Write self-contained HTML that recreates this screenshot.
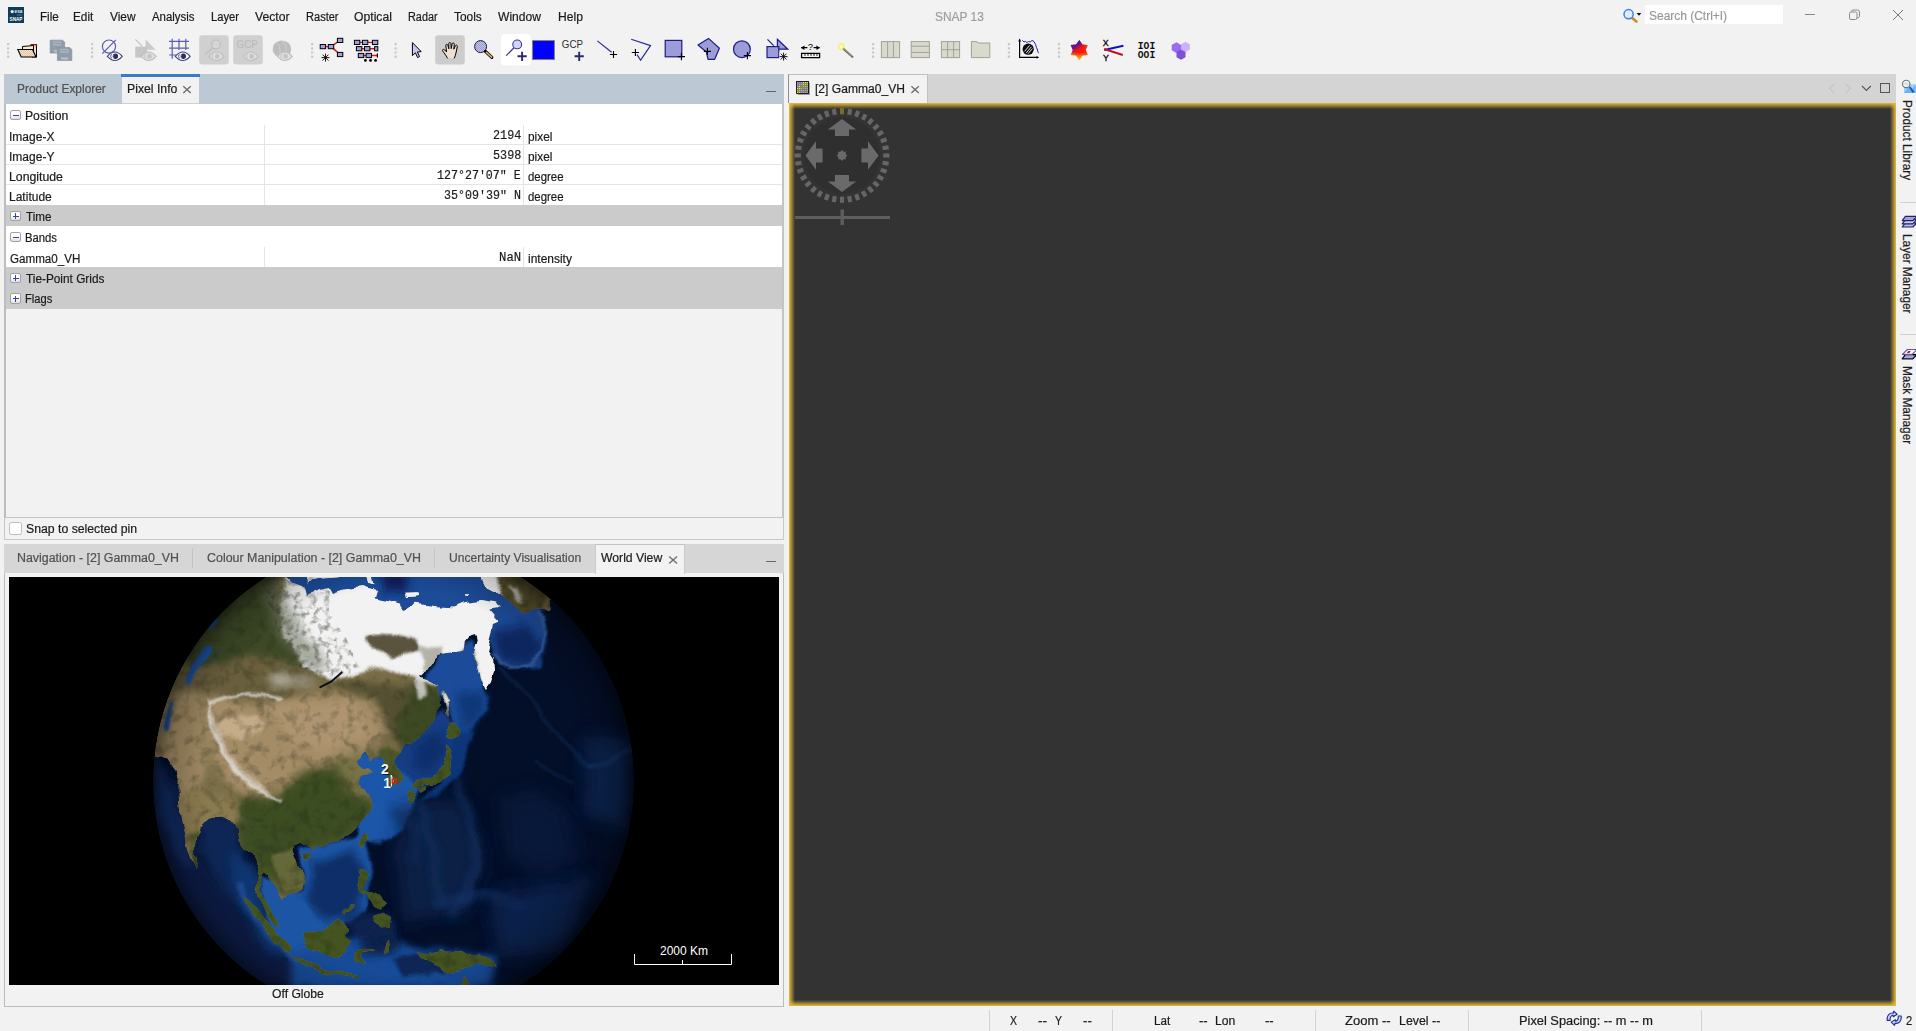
<!DOCTYPE html>
<html lang="en">
<head>
<meta charset="utf-8">
<title>SNAP 13</title>
<style>
*{box-sizing:border-box;margin:0;padding:0}
html,body{width:1916px;height:1031px;overflow:hidden;background:#f2f2f2}
body{position:relative;font-family:"Liberation Sans",sans-serif;font-size:12px;color:#1b1b1b}
.a{position:absolute;white-space:nowrap}
.t{position:absolute;white-space:pre;line-height:16px;height:16px;transform-origin:0 50%;-webkit-text-stroke:0.2px}
.ln{position:absolute;background:#e4e4e4}
.grow{position:absolute;left:6px;width:776px;background:#cbcbcb}
.pm{position:absolute;left:10px;width:10.6px;height:10.6px;border:1px solid #a2a2a2;border-radius:2px;background:linear-gradient(#ffffff 45%,#dedede)}
.pm:before{content:"";position:absolute;left:1.5px;top:4px;width:6px;height:1px;background:#3446a4}
.pm.plus:after{content:"";position:absolute;left:4px;top:1.5px;width:1px;height:6px;background:#3446a4}
.sep{position:absolute;top:1010px;width:1px;height:21px;background:#d2d2d2}
.vt{position:absolute;white-space:nowrap;line-height:14px;height:14px;font-size:12px;transform-origin:0 0;transform:rotate(90deg) scaleX(0.985);color:#1b1b1b;-webkit-text-stroke:0.2px}
</style>
</head>
<body>

<!-- ===== title / menu bar ===== -->
<div id="menubar">
<svg class="a" style="left:8px;top:7px" width="16" height="16" viewBox="0 0 16 16"><rect width="16" height="16" fill="#103c58"/><circle cx="4.2" cy="4.6" r="1.7" fill="#dfe8ee"/><text x="6.6" y="6.2" font-family="Liberation Sans,sans-serif" font-size="4.6" font-weight="bold" fill="#e8eef2">esa</text><rect x="9" y="7.6" width="5" height="0.8" fill="#5a8aa8"/><text x="1.6" y="14" font-family="Liberation Sans,sans-serif" font-size="5.8" font-weight="bold" fill="#fff" textLength="12.8" lengthAdjust="spacingAndGlyphs">SNAP</text></svg>
<!-- search -->
<svg class="a" style="left:1620px;top:4px" width="24" height="22" viewBox="1620 4 24 22"><path d="M1631.6,17.4 L1636.4,21.6" stroke="#d08a28" stroke-width="2.6" stroke-linecap="round"/><circle cx="1628.6" cy="14.2" r="4.6" fill="#dcecfc" stroke="#3c82d8" stroke-width="1.5"/><path d="M1636.6,13 H1641.4 L1639,15.8Z" fill="#111"/></svg>
<div class="a" style="left:1645px;top:5px;width:138px;height:19px;background:#fff"></div>
<svg class="a" style="left:1800px;top:6px" width="110" height="18" viewBox="1800 6 110 18"><path d="M1805,14.5 H1815" stroke="#8a8a8a" stroke-width="1"/><rect x="1849.5" y="12" width="7.5" height="7.5" rx="1.5" fill="none" stroke="#8a8a8a" stroke-width="1"/><path d="M1851.5,12 V11.5 Q1851.5,10 1853,10 H1857.5 Q1859.5,10 1859.5,12 V16.5 Q1859.5,17.8 1857.4,17.8" fill="none" stroke="#8a8a8a" stroke-width="1"/><path d="M1893,10 L1903,20 M1903,10 L1893,20" stroke="#7a7a7a" stroke-width="1"/></svg>
</div>

<!-- ===== toolbar ===== -->
<div id="toolbar"><!--TB-START--><svg class="a" style="left:0;top:32px" width="1200" height="38" viewBox="0 32 1200 38">
<defs>
<g id="eye"><path d="M-7.4,0.2 Q-3.6,-4.2 0,-4.2 Q3.8,-4.2 7.4,0.2 Q3.8,4.3 0,4.3 Q-3.6,4.3 -7.4,0.2Z" fill="#fff" stroke="#3c3c78" stroke-width="1.15"/><circle cx="0.6" cy="0" r="2.7" fill="#2c2c66"/><path d="M-3.4,-2 A3.8,3.8 0 0 0 -3.4,2.2" fill="none" stroke="#3c3c78" stroke-width="0.9"/><path d="M-1.4,-1.4 A2,2 0 0 0 -1.2,1.6" fill="none" stroke="#c8c8e4" stroke-width="0.9"/></g>
<g id="eyeg"><path d="M-7.4,0.2 Q-3.6,-4.2 0,-4.2 Q3.8,-4.2 7.4,0.2 Q3.8,4.3 0,4.3 Q-3.6,4.3 -7.4,0.2Z" fill="#e0e0e0" stroke="#bdbdbd" stroke-width="1.15"/><circle cx="0.6" cy="0" r="2.5" fill="#c4c4c4"/><path d="M-3.4,-2 A3.8,3.8 0 0 0 -3.4,2.2" fill="none" stroke="#c0c0c0" stroke-width="0.9"/><path d="M-1.4,-1.4 A2,2 0 0 0 -1.2,1.6" fill="none" stroke="#e4e4e4" stroke-width="0.9"/></g>
<g id="plus"><path d="M-3.6,0 H3.6 M0,-3.6 V3.6" stroke="#000" stroke-width="1.1" fill="none"/></g>
<g id="plusb"><path d="M-4.6,0 H4.6 M0,-4.6 V4.6" stroke="#2a2a72" stroke-width="1.9" fill="none"/></g>
<g id="ast"><path d="M-4,0 H4 M0,-4 V4 M-2.9,-2.9 L2.9,2.9 M-2.9,2.9 L2.9,-2.9" stroke="#000" stroke-width="0.9" fill="none"/></g>
<g id="nd"><rect x="-2.7" y="-2.1" width="5.4" height="4.2" fill="#a0a0e0" stroke="#000" stroke-width="1"/></g>
<g id="hdl"><rect x="-1" y="-1" width="2.2" height="2.2" rx="0.6" fill="#c6c6c6"/><rect x="-1" y="3.2" width="2.2" height="2.2" rx="0.6" fill="#c6c6c6"/><rect x="-1" y="7.4" width="2.2" height="2.2" rx="0.6" fill="#c6c6c6"/><rect x="-1" y="11.6" width="2.2" height="2.2" rx="0.6" fill="#c6c6c6"/></g>
<radialGradient id="starg" cx="0.52" cy="0.5" r="0.62"><stop offset="0" stop-color="#ff1208"/><stop offset="0.6" stop-color="#f42414"/><stop offset="1" stop-color="#ec8a1c"/></radialGradient>
<linearGradient id="starb" x1="0.25" y1="0" x2="0.55" y2="0.5"><stop offset="0" stop-color="#1c10c8"/><stop offset="0.55" stop-color="#4810a8" stop-opacity="0.75"/><stop offset="1" stop-color="#ff0000" stop-opacity="0"/></linearGradient>
<linearGradient id="stary" x1="0" y1="0" x2="0" y2="1"><stop offset="0.62" stop-color="#f0d000" stop-opacity="0"/><stop offset="1" stop-color="#e8d800"/></linearGradient>
<radialGradient id="glow" cx="0.5" cy="0.5" r="0.5"><stop offset="0" stop-color="#fff"/><stop offset="0.3" stop-color="#fffbb0"/><stop offset="0.6" stop-color="#f6ee50" stop-opacity="0.8"/><stop offset="1" stop-color="#f0e840" stop-opacity="0"/></radialGradient>
<pattern id="chk" width="2" height="2" patternUnits="userSpaceOnUse"><rect width="2" height="2" fill="#f4e2cc"/><rect width="1" height="1" fill="#e2c4a6"/><rect x="1" y="1" width="1" height="1" fill="#e2c4a6"/></pattern>
<pattern id="chk2" width="2" height="2" patternUnits="userSpaceOnUse"><rect width="2" height="2" fill="#c2c2e6"/><rect width="1" height="1" fill="#9c9cc8"/><rect x="1" y="1" width="1" height="1" fill="#9c9cc8"/></pattern>
</defs>
<use href="#hdl" x="8" y="44"/>
<use href="#hdl" x="92" y="44"/>
<use href="#hdl" x="312" y="44"/>
<use href="#hdl" x="395.5" y="44"/>
<use href="#hdl" x="873" y="44"/>
<use href="#hdl" x="1008.8" y="44"/>
<use href="#hdl" x="1058.9" y="44"/>
<path d="M31.5,44.5 H36.5 V57 H32" fill="#e8d8c0" stroke="#000" stroke-width="1"/><path d="M30.5,44.6 H36.4 V46" fill="none" stroke="#8a1a1a" stroke-width="1.4"/>
<path d="M22.5,46.5 L33.5,45.5 V56.5 H22.5Z" fill="#f6ecd8" stroke="#000" stroke-width="1"/>
<path d="M17.8,49.5 H32.5 L36,57 H21.2Z" fill="url(#chk)" stroke="#000" stroke-width="1.1"/>
<path d="M50.2,40.2 h12.4 l2,2 v10.8 h-14.4z" fill="#8f9caa" stroke="#8795a4" stroke-width="0.8" stroke-linejoin="round" transform="translate(0,0)"/>
<rect x="53.2" y="41.400000000000006" width="8" height="4.2" fill="#a8b3be"/>
<rect x="54.2" y="43.0" width="6" height="0.9" fill="#909daa"/>
<rect x="53.800000000000004" y="49.800000000000004" width="7.4" height="2.6" rx="0.8" fill="#b4bdc6"/>
<rect x="56" y="46.4" width="17" height="15" fill="#f2f2f2" opacity="0"/>
<path d="M57.4,47.6 h12.4 l2,2 v10.8 h-14.4z" fill="#8f9caa" stroke="#8795a4" stroke-width="0.8" stroke-linejoin="round" transform="translate(0,0)"/>
<rect x="60.4" y="48.800000000000004" width="8" height="4.2" fill="#a8b3be"/>
<rect x="61.4" y="50.4" width="6" height="0.9" fill="#909daa"/>
<rect x="61.0" y="57.2" width="7.4" height="2.6" rx="0.8" fill="#b4bdc6"/>
<circle cx="109" cy="46.6" r="6.6" fill="none" stroke="#5c5cb4" stroke-width="1.2"/><path d="M102.3,53.6 L115.9,39.8" stroke="#5c5cb4" stroke-width="1.2"/><use href="#eye" x="114.8" y="56.2"/>
<path d="M135.4,39.4 L142,46" stroke="#c4c4c4" stroke-width="1.2"/><path d="M145.6,39.3 L155.6,49.7 H145.6Z" fill="#cacaca"/><rect x="135.2" y="46.6" width="12" height="11" fill="#c6c6c6"/><use href="#eyeg" x="148.7" y="56.2"/>
<path d="M172.2,38.8 V58.8 M179,38.8 V50 M185.8,38.8 V50 M169,41.4 H189 M169,48.2 H189 M169,55 H176" stroke="#5c5cb4" stroke-width="1.2" fill="none"/><use href="#eye" x="182.7" y="56.2"/>
<rect x="199.2" y="35.2" width="29.6" height="29.4" rx="3" fill="#d0d0d0"/><rect x="233.2" y="35.2" width="29.6" height="29.4" rx="3" fill="#d0d0d0"/>
<circle cx="216" cy="44.4" r="4.4" fill="#d6d6d6" stroke="#bcbcbc" stroke-width="1.1"/><path d="M212.8,47.8 L205,54.6" stroke="#bcbcbc" stroke-width="1.2"/><use href="#eyeg" x="216.4" y="56.2"/>
<text x="236.6" y="47.8" font-family="Liberation Sans,sans-serif" font-size="10.4" fill="#b8b8b8" textLength="21.2" lengthAdjust="spacingAndGlyphs">GCP</text><use href="#eyeg" x="250.8" y="56.2"/>
<path d="M273,52 Q271.5,42 281.5,40.6 Q291,41 291.2,50 L290,54 L276,56Z" fill="#bdbdbd"/><path d="M277,43 Q281,47 280,55 M283,41 Q287,46 286.5,53" stroke="#d2d2d2" stroke-width="0.9" fill="none"/><use href="#eyeg" x="284.8" y="56.2"/>
<path d="M322.9,46.6 H331 M331,46.6 L340,40.4 M331,46.6 L340,54.4" stroke="#e01818" stroke-width="1.4" fill="none"/>
<use href="#nd" x="322.9" y="46.6"/>
<use href="#nd" x="331" y="46.6"/>
<use href="#nd" x="340.1" y="40.4"/>
<use href="#nd" x="340.1" y="54.5"/>
<use href="#ast" x="325.5" y="57.6"/>
<path d="M357,42.4 H375 M359,48.7 H376 M361,55.5 H377" stroke="#e01818" stroke-width="1.4" fill="none"/>
<use href="#nd" x="357.1" y="42.4"/>
<use href="#nd" x="365.1" y="42.4"/>
<use href="#nd" x="375.1" y="42.4"/>
<use href="#nd" x="359.1" y="48.7"/>
<use href="#nd" x="367.2" y="48.7"/>
<use href="#nd" x="361" y="55.5"/>
<use href="#nd" x="368.8" y="55.5"/>
<rect x="374.6" y="46.6" width="3.2" height="4.2" fill="#a0a0e0" stroke="#000" stroke-width="1"/><path d="M377.4,53.4 V57.6" stroke="#000" stroke-width="1.2"/>
<circle cx="365.4" cy="60.4" r="1.4" fill="#000"/>
<circle cx="370.5" cy="60.4" r="1.4" fill="#000"/>
<circle cx="375.6" cy="60.4" r="1.4" fill="#000"/>
<path d="M412.4,42.6 V55.6 L415.4,52.8 L417.6,57.6 L419.6,56.6 L417.4,52 L421.2,51.6Z" fill="#c6c6f2" stroke="#000" stroke-width="1" stroke-linejoin="miter"/>
<rect x="435.2" y="35.2" width="29.6" height="29.4" rx="3" fill="#cccccc"/>
<path d="M447.4,58 C446,55.2 443.8,52.6 442.6,50.8 C442,49.6 443.6,48.8 444.8,50 L446.6,52 L445.8,45.6 C445.6,44.2 447.4,43.8 447.8,45.2 L448.8,48.8 L448.8,43.6 C448.8,42.2 450.8,42.2 450.9,43.6 L451.2,48.6 L452.2,43.8 C452.5,42.5 454.4,42.8 454.3,44.2 L453.8,49.2 L455.4,45.8 C456,44.6 457.6,45.2 457.3,46.6 L456.2,52 C455.8,54.4 455.2,56 454.4,58Z" fill="#efe0d2"/><path d="M447.4,58 C446,55.2 443.8,52.6 442.6,50.8 C442,49.6 443.6,48.8 444.8,50 L446.6,52 L445.8,45.6 C445.6,44.2 447.4,43.8 447.8,45.2 L448.8,48.8 L448.8,43.6 C448.8,42.2 450.8,42.2 450.9,43.6 L451.2,48.6 L452.2,43.8 C452.5,42.5 454.4,42.8 454.3,44.2 L453.8,49.2 L455.4,45.8 C456,44.6 457.6,45.2 457.3,46.6 L456.2,52 C455.8,54.4 455.2,56 454.4,58" fill="none" stroke="#000" stroke-width="1" stroke-linejoin="round" stroke-linecap="round"/>
<circle cx="480.6" cy="46.6" r="6" fill="url(#chk2)" stroke="#1a1a4a" stroke-width="1"/><path d="M485.4,51.4 L491.8,57.4" stroke="#000" stroke-width="3.2" stroke-linecap="round"/><path d="M486.4,52.4 L491.6,57.2" stroke="#e6a868" stroke-width="1.6" stroke-linecap="round"/>
<rect x="501" y="34" width="29.8" height="31.4" rx="4" fill="#ffffff"/>
<path d="M514,47.8 L506.2,55.6" stroke="#3a3a84" stroke-width="1.3"/><circle cx="517.2" cy="44.4" r="4.4" fill="#d2d2ff" stroke="#3a3a84" stroke-width="1.1"/><use href="#plusb" x="522.1" y="56.3"/>
<rect x="532.6" y="40.6" width="21.8" height="19" fill="#0000ff" stroke="#8c7c64" stroke-width="0.9"/>
<text x="561.8" y="48" font-family="Liberation Sans,sans-serif" font-size="10.4" fill="#303030" textLength="21.2" lengthAdjust="spacingAndGlyphs">GCP</text><use href="#plusb" x="579.2" y="56.3"/>
<path d="M597.3,40.9 L611.6,52.2" stroke="#2a2a9c" stroke-width="1.2"/><use href="#plus" x="613.5" y="54.5"/>
<path d="M631.2,39.3 L650.5,45.6 L640.6,60.2 L637,54.6" stroke="#2a2a9c" stroke-width="1.2" fill="none"/><use href="#plus" x="635.4" y="52.5"/>
<rect x="665.2" y="40.4" width="16.6" height="16.4" fill="#9c9cd8" stroke="#1c1c8c" stroke-width="1.2"/><use href="#plus" x="681.4" y="56.6"/>
<path d="M708.5,38.4 L719.4,48.2 L714.7,59.3 H708 L706.4,52 L698,45Z" fill="#9c9cd8" stroke="#1c1c8c" stroke-width="1.2" stroke-linejoin="round"/><use href="#plus" x="707.4" y="51.4"/>
<circle cx="741.9" cy="49.2" r="8.4" fill="#9c9cd8" stroke="#1c1c8c" stroke-width="1.2"/><use href="#plus" x="747.4" y="55.6"/>
<path d="M767.5,39.3 L773.7,45.6" stroke="#1c1c8c" stroke-width="1.2"/><path d="M777.4,39.3 L787.8,49.2 H777.4Z" fill="#9c9cd8" stroke="#1c1c8c" stroke-width="1.2"/><rect x="767" y="46.6" width="11.8" height="11" fill="#9c9cd8" stroke="#1c1c8c" stroke-width="1.2"/><rect x="779.4" y="52" width="8.6" height="9" fill="#f2f2f2"/><use href="#ast" x="783.6" y="56.6"/>
<path d="M801.2,47.7 H807.4 M813.6,47.7 H819.6" stroke="#000" stroke-width="1.2"/><path d="M801,47.7 L804.4,45.4 V50Z M819.8,47.7 L816.4,45.4 V50Z" fill="#000"/>
<text x="810.5" y="50" text-anchor="middle" font-family="Liberation Sans,sans-serif" font-size="9.5" fill="#000">?</text>
<rect x="801.6" y="53.4" width="18" height="4.2" fill="#fff" stroke="#000" stroke-width="1.3"/><path d="M805,54 V56 M808,54 V56 M811,54 V56 M814,54 V56 M817,54 V56" stroke="#000" stroke-width="0.9"/>
<path d="M843.6,49 L852.4,56.8" stroke="#707060" stroke-width="2.2" stroke-linecap="round"/><path d="M844.4,49.2 L852,56" stroke="#a8a898" stroke-width="0.8"/><circle cx="841.2" cy="46.6" r="4.2" fill="url(#glow)"/>
<rect x="881.4" y="41.6" width="18.2" height="16" fill="#dadacc" stroke="#a0a09c" stroke-width="1"/>
<path d="M887.6,41.6 V57.6 M893.4,41.6 V57.6" stroke="#a0a09c" stroke-width="1"/>
<rect x="911.2" y="41.6" width="18.2" height="16" fill="#dadacc" stroke="#a0a09c" stroke-width="1"/>
<path d="M911.2,46.2 H929.4 M911.2,52.4 H929.4" stroke="#a0a09c" stroke-width="1"/>
<rect x="941.4" y="41.6" width="18.2" height="16" fill="#dadacc" stroke="#a0a09c" stroke-width="1"/>
<path d="M947.6,41.6 V57.6 M953.7,41.6 V57.6 M941.4,49.7 H959.6" stroke="#a0a09c" stroke-width="1"/>
<path d="M971.4,41.6 H977 L977.8,43 H989.8 V57.6 H971.4Z" fill="#dadacc" stroke="#a0a09c" stroke-width="1"/>
<path d="M1019.6,39.6 V57.4 H1038" stroke="#000" stroke-width="1.2" fill="none"/><path d="M1019.6,38.6 L1018.2,41.4 H1021Z M1039.2,57.4 L1036.6,56 V58.8Z" fill="#000"/>
<circle cx="1028.2" cy="49.2" r="5.6" fill="#0a0a0a"/><path d="M1024.6,51.4 L1029.6,45.4 M1026.2,53 L1031.4,46.8 M1028.2,53.6 L1032.4,48.6" stroke="#fff" stroke-width="0.9"/>
<path d="M1022.4,40.4 L1024,42 L1025.4,41.2 L1026.6,42.6 L1028.4,41.6 L1030.4,41.8 L1032,40.4 L1034,41.6 L1035.6,44.6 L1036.4,47.4 L1037.2,49 L1037.8,51.6 L1038.6,53.2" stroke="#1c1cc0" stroke-width="1" fill="none"/>
<path d="M1079.3,40.1 L1082.5,44.4 L1087.9,45.0 L1085.8,50.0 L1087.9,54.9 L1082.5,55.6 L1079.3,59.9 L1076.0,55.6 L1070.7,55.0 L1072.8,50.0 L1070.7,45.0 L1076.0,44.4Z" fill="url(#starg)"/><path d="M1079.3,40.1 L1082.5,44.4 L1087.9,45.0 L1085.8,50.0 L1087.9,54.9 L1082.5,55.6 L1079.3,59.9 L1076.0,55.6 L1070.7,55.0 L1072.8,50.0 L1070.7,45.0 L1076.0,44.4Z" fill="url(#starb)"/><path d="M1079.3,40.1 L1082.5,44.4 L1087.9,45.0 L1085.8,50.0 L1087.9,54.9 L1082.5,55.6 L1079.3,59.9 L1076.0,55.6 L1070.7,55.0 L1072.8,50.0 L1070.7,45.0 L1076.0,44.4Z" fill="url(#stary)"/>
<text x="1102.8" y="45.5" font-family="Liberation Sans,sans-serif" font-size="8.8" fill="#000" stroke="#000" stroke-width="0.3">X</text><text x="1103" y="61" font-family="Liberation Sans,sans-serif" font-size="8.8" fill="#000" stroke="#000" stroke-width="0.3">Y</text>
<path d="M1104.2,50 L1123.4,45.7" stroke="#1010c0" stroke-width="1.9"/><path d="M1104.2,49 L1122.8,55" stroke="#c01020" stroke-width="1.9"/>
<text x="1137.8" y="48.5" font-family="Liberation Mono,monospace" font-size="10.6" font-weight="bold" fill="#111" textLength="17.4" lengthAdjust="spacingAndGlyphs">IOI</text><text x="1137.8" y="58.1" font-family="Liberation Mono,monospace" font-size="10.6" font-weight="bold" fill="#111" textLength="17.4" lengthAdjust="spacingAndGlyphs">OOI</text>
<path d="M1189.9,49.6 L1185.4,52.2 L1180.9,49.6 L1180.9,44.4 L1185.4,41.8 L1189.9,44.4Z" fill="#cdb0ff"/>
<path d="M1181.1,50.3 L1176.4,53.0 L1171.7,50.3 L1171.7,44.9 L1176.4,42.2 L1181.1,44.9Z" fill="#9a6cf2"/>
<path d="M1185.5,57.2 L1181.0,59.8 L1176.5,57.2 L1176.5,52.0 L1181.0,49.4 L1185.5,52.0Z" fill="#7d50d6"/>
</svg><!--TB-END--></div>

<!-- ===== left top panel (Pixel Info) ===== -->
<div id="pixelinfo">
<div class="a" style="left:4px;top:74px;width:780px;height:30px;background:#bcc8d4"></div>
<div class="a" style="left:121.5px;top:77px;width:77px;height:26.5px;background:#f1f1f1;border-bottom:1px solid #d0d0d0"></div><div class="a" style="left:121px;top:74px;width:78.5px;height:3px;background:#3a7bc8"></div>
<svg class="a" style="left:180px;top:82px" width="14" height="14" viewBox="180 82 14 14"><path d="M183.3,86.2 L190.7,93 M190.7,86.2 L183.3,93" stroke="#6c6c6c" stroke-width="1.3"/></svg>
<div class="a" style="left:765.5px;top:91px;width:10.5px;height:1px;background:#666"></div>
<div class="a" style="left:4px;top:104px;width:780px;height:414px;border-left:2px solid #bdbdbd;border-right:2px solid #c4c4c4;border-bottom:1px solid #c4c4c4;background:#f2f2f2"></div>
<div class="a" style="left:6px;top:104px;width:776px;height:101px;background:#fff"></div>
<div class="a" style="left:6px;top:226px;width:776px;height:41px;background:#fff"></div>
<div class="grow" style="top:205px;height:21px"></div>
<div class="grow" style="top:267px;height:42px"></div>
<div class="ln" style="left:6px;top:144px;width:776px;height:1px"></div>
<div class="ln" style="left:6px;top:164px;width:776px;height:1px"></div>
<div class="ln" style="left:6px;top:184px;width:776px;height:1px"></div>
<div class="ln" style="left:264px;top:125px;width:1px;height:80px"></div>
<div class="ln" style="left:523px;top:125px;width:1px;height:80px"></div>
<div class="ln" style="left:264px;top:247px;width:1px;height:20px"></div>
<div class="ln" style="left:523px;top:247px;width:1px;height:20px"></div>
<div class="pm" style="top:109.5px"></div>
<div class="pm plus" style="top:210.5px"></div>
<div class="pm" style="top:231.5px"></div>
<div class="pm plus" style="top:272.5px"></div>
<div class="pm plus" style="top:293px"></div>
<div class="a" style="left:4px;top:518px;width:780px;height:22px;border:1px solid #c8c8c8;border-top:0"></div>
<div class="a" style="left:8.5px;top:521.5px;width:13px;height:13px;border:1px solid #bcbcbc;border-radius:2.5px;background:#fff"></div>
</div>

<!-- ===== left bottom panel (World View) ===== -->
<div id="worldview">
<div class="a" style="left:4px;top:544px;width:780px;height:29px;background:#d6d6d6"></div>
<div class="a" style="left:595px;top:544px;width:90px;height:30px;background:#f2f2f2;border:1px solid #cccccc;border-top-color:#c2c2c2;border-bottom:0"></div>
<div class="a" style="left:192px;top:548px;width:1px;height:20px;background:#c4c4c4"></div>
<div class="a" style="left:434px;top:548px;width:1px;height:20px;background:#c4c4c4"></div>
<svg class="a" style="left:666px;top:553px" width="14" height="14" viewBox="666 553 14 14"><path d="M669.2,556.4 L677,563.6 M677,556.4 L669.2,563.6" stroke="#6c6c6c" stroke-width="1.3"/></svg>
<div class="a" style="left:766px;top:561px;width:10px;height:1px;background:#666"></div>
<div class="a" style="left:4px;top:573px;width:780px;height:434px;border:1px solid #bcbcbc;border-top:0"></div>
<!--GLOBE-START--><svg class="a" style="left:9px;top:577px" width="770" height="408" viewBox="9 577 770 408">
<defs>
<clipPath id="gc"><circle cx="393.5" cy="781" r="240"/></clipPath>
<clipPath id="lc"><path d="M201.5,566.2 L285.6,566.2 L285.6,577.2 L291.4,583.0 L303.8,587.4 L306.0,596.9 L318.5,591.1 L328.7,587.9 L331.9,594.0 L341.8,590.8 L362.3,587.9 L376.9,591.1 L374.7,598.4 L388.6,601.3 L397.4,604.2 L401.0,610.1 L412.0,606.4 L415.6,602.8 L435.4,605.0 L454.4,606.4 L464.6,602.0 L482.1,600.1 L495.3,602.5 L499.7,608.9 L490.2,610.4 L499.7,621.5 L493.8,624.0 L492.4,632.7 L490.0,642.2 L488.0,652.4 L493.1,660.6 L494.1,670.8 L491.0,680.9 L485.9,689.1 L481.9,680.9 L475.8,664.6 L473.7,654.5 L477.8,640.2 L475.8,634.1 L469.6,636.1 L464.6,642.2 L463.5,650.4 L451.3,653.4 L439.1,655.5 L430.9,662.6 L423.8,672.8 L419.7,676.9 L430.9,680.9 L439.1,685.0 L439.5,703.6 L436.8,714.4 L431.4,725.3 L423.2,734.8 L415.1,740.3 L406.9,744.3 L401.5,751.1 L397.4,756.6 L396.1,760.6 L400.1,766.1 L402.9,772.9 L402.2,779.6 L398.8,783.7 L394.0,785.1 L390.6,783.7 L389.3,776.9 L387.9,771.5 L386.6,766.1 L385.2,760.6 L379.8,756.6 L374.3,756.6 L370.3,757.9 L369.6,753.8 L366.2,751.8 L360.7,757.9 L358.7,760.6 L360.7,766.1 L363.5,768.8 L368.9,768.1 L373.0,770.8 L367.5,773.5 L360.7,778.3 L359.4,782.4 L364.8,787.8 L370.3,797.3 L370.9,805.4 L367.5,815.0 L362.1,823.1 L366.1,820.0 L361.3,823.2 L351.7,832.8 L338.9,840.8 L326.0,844.0 L316.4,847.2 L311.6,849.6 L308.4,846.4 L300.4,844.8 L294.0,847.2 L290.0,853.6 L294.0,861.6 L300.4,871.2 L303.6,880.8 L302.8,888.8 L297.2,893.6 L287.6,896.8 L282.8,900.0 L281.2,896.8 L278.0,890.4 L271.6,882.4 L266.8,874.4 L261.2,871.2 L258.8,876.0 L259.6,887.2 L262.0,895.2 L265.2,900.0 L271.6,906.4 L276.4,917.6 L279.9,927.6 L276.4,925.7 L268.4,916.0 L262.8,904.8 L258.0,896.8 L254.8,888.8 L255.6,880.8 L256.4,868.0 L254.0,855.2 L247.6,852.0 L241.2,850.4 L238.8,836.0 L236.4,820.0 L240.9,842.2 L237.8,830.0 L229.6,819.8 L221.5,815.7 L209.3,819.8 L201.1,825.9 L195.0,836.1 L193.4,850.4 L196.0,865.7 L190.9,860.6 L186.9,848.3 L183.8,832.0 L180.7,815.7 L178.7,795.4 L178.7,783.1 L176.7,775.0 L175.7,770.6 L168.5,759.4 L162.4,756.3 L152.2,758.4 L99.3,758.4 L99.3,562.8Z M442.2,690.0 L446.3,692.7 L450.4,700.9 L448.4,702.2 L447.7,709.0 L449.0,717.2 L447.0,717.2 L445.6,706.3 L443.6,698.1Z M447.7,725.3 L454.5,724.0 L462.6,730.7 L458.5,736.2 L451.7,738.9 L446.3,736.2Z M446.3,744.3 L451.7,747.0 L453.8,755.2 L451.7,766.1 L450.4,776.9 L442.2,779.6 L435.4,783.7 L427.3,783.7 L420.5,785.1 L412.4,787.1 L409.6,785.1 L417.8,779.6 L428.7,776.9 L436.8,772.9 L443.6,766.1 L446.3,755.2Z M405.6,790.5 L412.4,789.8 L415.1,794.6 L412.4,801.4 L408.3,802.7 L406.2,797.3Z M417.8,787.8 L425.9,785.1 L427.3,787.8 L420.5,791.9Z M358.9,842.4 L362.9,836.0 L366.9,835.2 L366.1,842.4 L362.1,849.6 L359.7,847.2Z M302.0,856.0 L308.4,853.6 L312.4,856.0 L310.0,860.0 L304.4,860.8Z M192.6,853.4 L196.0,856.5 L198.1,864.6 L195.0,867.7 L192.6,862.6Z M244.4,898.4 L249.2,900.0 L257.2,909.6 L266.8,922.4 L276.4,932.1 L286.0,941.7 L291.6,946.5 L290.8,952.9 L284.4,950.5 L274.8,941.7 L263.6,928.9 L252.4,912.8Z M302.8,934.5 L310.0,932.1 L319.6,930.5 L329.2,925.7 L340.5,920.0 L348.5,924.0 L350.1,928.9 L345.3,935.3 L349.3,941.7 L343.7,946.5 L340.5,952.9 L337.3,958.5 L329.2,956.1 L319.6,951.3 L310.0,949.7 L306.8,941.7Z M291.6,956.1 L302.0,960.1 L316.4,964.9 L332.4,969.7 L345.3,972.9 L358.1,976.1 L358.1,978.5 L342.1,976.1 L326.0,972.1 L310.0,967.3 L294.0,960.1Z M358.1,869.6 L364.5,868.0 L367.7,872.8 L366.1,880.8 L363.7,888.8 L369.3,893.6 L364.5,895.2 L358.1,887.2 L356.5,879.2Z M367.7,892.0 L377.3,895.2 L383.7,903.2 L380.5,909.6 L372.5,906.4 L367.7,900.0Z M374.1,916.0 L383.7,912.8 L390.1,919.2 L388.5,928.9 L380.5,927.3 L374.9,922.4Z M343.7,912.0 L353.3,904.8 L354.9,906.4 L345.3,914.4Z M353.3,952.9 L358.1,949.7 L370.9,948.1 L374.1,950.5 L362.9,952.9 L361.3,957.7 L367.7,964.1 L366.1,966.5 L359.7,962.5 L356.5,965.7 L354.1,959.3Z M414.6,952.3 L426.9,954.3 L441.1,951.2 L461.5,952.3 L479.8,954.3 L490.0,960.4 L496.1,965.5 L485.9,967.5 L473.7,965.5 L461.5,970.6 L447.2,973.7 L441.1,968.6 L430.9,962.4 L420.7,958.4Z M384.1,942.1 L388.1,941.1 L389.2,950.2 L385.1,952.3Z M460.5,985.1 L464.6,975.7 L469.6,985.1Z M482.1,570.6 L482.1,579.4 L485.8,586.7 L493.8,591.1 L499.7,596.9 L507.0,600.6 L515.0,605.0 L521.6,613.3 L528.2,614.5 L533.3,609.3 L550.8,610.1 L550.8,570.6Z M306.8,584.1 L309.7,580.8 L321.4,578.7 L338.9,577.2 L338.9,572.1 L306.8,572.1Z M365.2,573.5 L371.1,573.5 L373.3,585.2 L368.1,583.8Z M406.1,592.8 L416.4,592.2 L417.1,596.2 L406.9,596.9Z M465.3,593.3 L469.0,593.3 L469.0,595.8 L465.3,595.8Z"/></clipPath>
<filter id="b1" x="-20%" y="-20%" width="140%" height="140%"><feGaussianBlur stdDeviation="0.8"/></filter>
<filter id="b3" x="-30%" y="-30%" width="160%" height="160%"><feGaussianBlur stdDeviation="1.8"/></filter>
<filter id="b6" x="-40%" y="-40%" width="180%" height="180%"><feGaussianBlur stdDeviation="4"/></filter>
<filter id="b12" x="-50%" y="-50%" width="200%" height="200%"><feGaussianBlur stdDeviation="9"/></filter>
<filter id="spk" x="0" y="0" width="100%" height="100%" color-interpolation-filters="sRGB"><feTurbulence type="fractalNoise" baseFrequency="0.09" numOctaves="3" seed="7" result="n"/><feColorMatrix in="n" type="matrix" values="0 0 0 0 0.12  0 0 0 0 0.14  0 0 0 0 0.08  0 0 0 3.2 -1.55"/><feComposite in2="SourceGraphic" operator="in"/></filter>
<filter id="spk2" x="0" y="0" width="100%" height="100%" color-interpolation-filters="sRGB"><feTurbulence type="fractalNoise" baseFrequency="0.16" numOctaves="2" seed="3" result="n"/><feColorMatrix in="n" type="matrix" values="0 0 0 0 0.1  0 0 0 0 0.12  0 0 0 0 0.06  0 0 0 2.4 -1.1"/><feGaussianBlur stdDeviation="0.5"/><feComposite in2="SourceGraphic" operator="in"/></filter>
<filter id="dsp" x="0" y="0" width="100%" height="100%" color-interpolation-filters="sRGB"><feTurbulence type="fractalNoise" baseFrequency="0.045" numOctaves="3" seed="11" result="t"/><feDisplacementMap in="SourceGraphic" in2="t" scale="9" xChannelSelector="R" yChannelSelector="G"/></filter>
<radialGradient id="limb" cx="393.5" cy="781" r="240" gradientUnits="userSpaceOnUse"><stop offset="0" stop-color="#000" stop-opacity="0"/><stop offset="0.8" stop-color="#000" stop-opacity="0"/><stop offset="0.94" stop-color="#000" stop-opacity="0.2"/><stop offset="1" stop-color="#000" stop-opacity="0.5"/></radialGradient>
</defs>
<rect x="9" y="577" width="770" height="408" fill="#000"/>
<g clip-path="url(#gc)">
<rect x="100" y="520" width="600" height="520" fill="#030e28"/>
<g filter="url(#dsp)">
<rect x="100" y="520" width="600" height="520" fill="#030e28"/>
<path d="M140.0,734.1 L187.7,797.8 L203.6,861.4 L243.4,917.1 L283.2,956.9 L346.8,985.1 L140.0,985.1Z" fill="#071d46" filter="url(#b6)" opacity="1"/>
<path d="M154.3,754.0 L179.8,813.7 L193.7,871.3 L179.8,861.4 L155.9,813.7Z" fill="#0c2c60" filter="url(#b6)" opacity="1"/>
<path d="M195.7,817.6 L237.5,813.7 L241.4,853.4 L249.4,921.1 L219.6,889.2 L199.7,853.4Z" fill="#0a2654" filter="url(#b6)" opacity="1"/>
<path d="M232.3,849.5 L256.1,869.4 L272.1,933.0 L295.9,958.9 L271.3,954.9 L242.6,913.1 L230.7,877.3Z" fill="#103670" filter="url(#b6)" opacity="1"/>
<path d="M239.4,885.3 L259.3,925.0 L291.2,956.9 L327.0,972.8" fill="none" stroke="#1a4c94" stroke-width="7" stroke-linecap="round" stroke-linejoin="round" filter="url(#b3)" opacity="0.8"/>
<path d="M259.3,567.0 L541.8,567.0 L545.7,610.8 L498.0,602.8 L490.0,618.8 L394.6,618.8 L271.3,602.8Z" fill="#1b4c98" filter="url(#b3)" opacity="1"/>
<path d="M378.7,573.0 L411.3,573.0 L407.3,591.7 L383.4,592.5Z" fill="#0a1f58" filter="url(#b6)" opacity="1"/>
<path d="M486.1,594.9 L521.9,586.9 L543.7,614.8 L547.7,640.6 L539.8,668.5 L509.9,667.3 L492.0,656.5 L490.0,630.7Z" fill="#1a4a94" filter="url(#b3)" opacity="1"/>
<path d="M496.0,631.5 L521.9,623.5 L544.9,643.4 L537.8,665.7 L510.7,664.9 L495.2,654.6Z" fill="#0b2860" filter="url(#b6)" opacity="1"/>
<path d="M494.0,656.5 L509.9,667.3 L531.8,665.7 L542.5,650.6 L545.7,630.7 L539.8,610.8" fill="none" stroke="#3a64a0" stroke-width="2.2" stroke-linecap="round" stroke-linejoin="round" filter="url(#b1)" opacity="0.9"/>
<path d="M418.4,684.4 L442.3,652.6 L472.1,640.6 L480.1,654.6 L482.9,686.4 L488.1,708.3 L467.0,736.1 L453.4,728.1 L444.3,696.3Z" fill="#1a4c9a" filter="url(#b3)" opacity="1"/>
<path d="M455.0,694.3 L482.1,689.6 L485.3,710.2 L467.0,734.9Z" fill="#113878" filter="url(#b6)" opacity="1"/>
<path d="M392.6,756.0 L418.4,734.1 L443.1,708.3 L455.0,734.1 L451.1,762.0 L435.1,782.6 L410.5,791.8 L400.5,775.9Z" fill="#123c84" filter="url(#b3)" opacity="1"/>
<path d="M414.5,746.0 L442.3,730.1 L447.1,754.0 L430.4,773.9 L414.5,769.9Z" fill="#0d2e6c" filter="url(#b6)" opacity="1"/>
<path d="M455.0,728.1 L472.1,734.1 L460.2,775.9 L436.3,797.8 L418.4,801.7 L442.3,781.8Z" fill="#113a80" filter="url(#b3)" opacity="0.9"/>
<path d="M352.8,746.0 L396.6,762.0 L418.4,789.8 L414.5,801.7 L402.5,831.6 L377.9,843.5 L356.8,842.3 L359.6,817.6 L358.0,797.8 L352.8,777.9Z" fill="#1c56a8" filter="url(#b3)" opacity="1"/>
<path d="M297.1,849.5 L362.8,835.5 L372.7,869.4 L364.7,913.1 L340.9,927.0 L309.1,935.0 L299.1,917.9 L278.4,898.0 L303.9,890.0Z" fill="#1c54a4" filter="url(#b3)" opacity="1"/>
<path d="M311.8,862.2 L354.8,849.5 L367.5,878.1 L355.6,913.9 L327.0,921.9 L307.1,902.0Z" fill="#0e2e68" filter="url(#b6)" opacity="1"/>
<path d="M258.5,876.5 L277.2,881.3 L288.0,889.2 L309.1,909.1 L321.0,927.0 L352.8,950.9 L299.1,966.8 L270.5,933.0Z" fill="#1c54a4" filter="url(#b3)" opacity="1"/>
<path d="M291.2,952.9 L362.8,933.0 L418.4,948.9 L498.0,954.9 L490.0,988.7 L291.2,988.7Z" fill="#184c98" filter="url(#b6)" opacity="1"/>
<path d="M356.8,933.0 L394.6,925.0 L400.5,949.7 L364.7,957.7Z" fill="#08204c" filter="url(#b6)" opacity="1"/>
<path d="M346.8,916.3 L387.4,912.3 L394.6,935.0 L354.8,939.0Z" fill="#0a2450" filter="url(#b6)" opacity="1"/>
<path d="M394.6,956.9 L442.3,952.9 L450.3,972.8 L402.5,976.8Z" fill="#0a2250" filter="url(#b3)" opacity="0.9"/>
<path d="M402.5,805.7 L458.2,797.8 L486.1,853.4 L470.2,913.1 L402.5,921.1 L394.6,853.4Z" fill="#08204a" filter="url(#b12)" opacity="0.9"/>
<path d="M458.2,779.9 L470.9,821.6 L478.9,861.4 L467.0,893.2 L451.1,913.9" fill="none" stroke="#14386e" stroke-width="6" stroke-linecap="round" stroke-linejoin="round" filter="url(#b6)" opacity="0.8"/>
<path d="M464.2,781.8 L477.3,821.6 L485.7,861.4 L475.3,893.2" fill="none" stroke="#020a1c" stroke-width="3" stroke-linecap="round" stroke-linejoin="round" filter="url(#b3)" opacity="0.6"/>
<path d="M418.4,802.5 L435.1,853.4 L439.1,902.0" fill="none" stroke="#10305f" stroke-width="8" stroke-linecap="round" stroke-linejoin="round" filter="url(#b6)" opacity="0.7"/>
<path d="M394.6,813.7 L418.4,829.6 L414.5,861.4" fill="none" stroke="#0e2a58" stroke-width="8" stroke-linecap="round" stroke-linejoin="round" filter="url(#b6)" opacity="0.6"/>
<path d="M436.3,905.2 L482.1,893.2 L521.9,905.2" fill="none" stroke="#12346a" stroke-width="8" stroke-linecap="round" stroke-linejoin="round" filter="url(#b6)" opacity="0.7"/>
<path d="M584.7,734.1 L631.2,742.1 L627.3,833.6 L585.5,813.7Z" fill="#0c2a5a" filter="url(#b12)" opacity="0.7"/>
<path d="M490.0,893.2 L597.4,875.3 L559.6,952.9 L498.0,957.7Z" fill="#0b2654" filter="url(#b12)" opacity="0.75"/>
<path d="M500.0,667.3 L537.8,706.3 L562.4,742.1 L590.3,766.7" fill="none" stroke="#153a68" stroke-width="4" stroke-linecap="round" stroke-linejoin="round" filter="url(#b3)" opacity="0.35"/>
<path d="M590.3,766.7 L609.4,762.0 L631.2,746.8" fill="none" stroke="#1a4272" stroke-width="5" stroke-linecap="round" stroke-linejoin="round" filter="url(#b3)" opacity="0.35"/>
<path d="M537.8,762.0 L569.6,781.8" fill="none" stroke="#173e70" stroke-width="5" stroke-linecap="round" stroke-linejoin="round" filter="url(#b3)" opacity="0.25"/>
<path d="M498.0,797.8 L537.8,789.8 L569.6,813.7 L577.5,861.4 L537.8,877.3 L506.0,853.4Z" fill="#0a2048" filter="url(#b12)" opacity="0.5"/>
<g clip-path="url(#lc)">
<rect x="100" y="500" width="600" height="520" fill="#7a6e48"/>
<path d="M277.2,567.0 L239.4,567.0 L179.8,634.7 L187.7,670.5 L219.6,668.5 L259.3,656.5 L291.2,667.3 L317.0,672.5 L299.9,642.6 L280.0,614.8 L275.2,590.9Z" fill="#3e4828" filter="url(#b6)" opacity="1"/>
<path d="M179.8,672.5 L219.6,667.3 L259.3,656.5 L317.0,672.5 L309.1,696.3 L259.3,704.3 L203.6,696.3 L177.8,690.4Z" fill="#6a5e3c" filter="url(#b6)" opacity="1"/>
<path d="M148.0,694.3 L203.6,694.3 L208.4,734.1 L204.4,781.8 L179.8,817.6 L155.9,805.7 L148.0,754.0Z" fill="#9c8660" filter="url(#b6)" opacity="1"/>
<path d="M203.6,694.3 L259.3,703.1 L307.1,694.3 L347.6,690.4 L379.5,702.3 L387.4,734.1 L363.5,754.8 L331.7,762.7 L299.9,774.7 L272.1,798.5 L235.5,790.6 L211.6,762.0 L205.6,726.2Z" fill="#a48c66" filter="url(#b6)" opacity="1"/>
<path d="M219.6,719.0 L255.4,714.2 L268.1,730.1 L244.2,738.9 L219.6,734.9Z" fill="#c4ac88" filter="url(#b3)" opacity="1"/>
<path d="M272.1,707.1 L354.8,703.1 L371.5,734.1 L331.7,750.8 L291.2,742.9Z" fill="#ae9470" filter="url(#b6)" opacity="1"/>
<path d="M315.0,676.4 L418.4,688.4 L439.1,706.3 L435.1,734.9 L403.3,750.8 L387.4,734.1 L379.5,703.1 L347.6,690.4Z" fill="#545030" filter="url(#b6)" opacity="1"/>
<path d="M414.5,684.4 L444.3,682.4 L448.3,710.2 L439.1,734.9 L427.2,750.8 L402.5,752.0 L394.6,726.2Z" fill="#3c4824" filter="url(#b6)" opacity="1"/>
<path d="M331.7,762.7 L363.5,754.8 L379.5,766.7 L371.5,798.5 L347.6,790.6Z" fill="#787244" filter="url(#b6)" opacity="1"/>
<path d="M272.1,798.5 L299.9,774.7 L331.7,762.7 L347.6,790.6 L371.5,798.5 L374.7,821.6 L347.6,842.3 L315.8,850.3 L299.9,854.2 L303.9,890.0 L284.0,894.0 L259.3,870.1 L240.2,853.4 L233.5,821.6 L232.3,798.5Z" fill="#3c4e22" filter="url(#b6)" opacity="1"/>
<path d="M252.6,864.6 L268.1,868.6 L284.0,929.8 L271.3,929.8 L255.4,893.2Z" fill="#44541f" filter="url(#b3)" opacity="1"/>
<path d="M271.3,854.2 L295.1,849.5 L303.9,886.1 L284.0,894.0Z" fill="#6a6c3a" filter="url(#b3)" opacity="0.9"/>
<path d="M175.8,789.8 L235.5,797.8 L240.2,822.4 L220.4,830.4 L200.5,854.2 L192.5,871.3 L179.8,830.4Z" fill="#8a7a50" filter="url(#b6)" opacity="1"/>
<path d="M186.9,830.4 L208.4,829.6 L199.7,853.4 L194.9,871.3Z" fill="#5e6234" filter="url(#b3)" opacity="0.9"/>
<path d="M377.9,748.4 L405.7,753.2 L407.3,786.6 L386.6,789.0 L379.9,766.7Z" fill="#4a5528" filter="url(#b3)" opacity="0.95"/>
<path d="M447.7,725.3 L454.5,724.0 L462.6,730.7 L458.5,736.2 L451.7,738.9 L446.3,736.2Z" fill="#44541f"/>
<path d="M446.3,744.3 L451.7,747.0 L453.8,755.2 L451.7,766.1 L450.4,776.9 L442.2,779.6 L435.4,783.7 L427.3,783.7 L420.5,785.1 L412.4,787.1 L409.6,785.1 L417.8,779.6 L428.7,776.9 L436.8,772.9 L443.6,766.1 L446.3,755.2Z" fill="#44541f"/>
<path d="M405.6,790.5 L412.4,789.8 L415.1,794.6 L412.4,801.4 L408.3,802.7 L406.2,797.3Z" fill="#44541f"/>
<path d="M417.8,787.8 L425.9,785.1 L427.3,787.8 L420.5,791.9Z" fill="#44541f"/>
<path d="M358.9,842.4 L362.9,836.0 L366.9,835.2 L366.1,842.4 L362.1,849.6 L359.7,847.2Z" fill="#44541f"/>
<path d="M302.0,856.0 L308.4,853.6 L312.4,856.0 L310.0,860.0 L304.4,860.8Z" fill="#44541f"/>
<path d="M192.6,853.4 L196.0,856.5 L198.1,864.6 L195.0,867.7 L192.6,862.6Z" fill="#44541f"/>
<path d="M244.4,898.4 L249.2,900.0 L257.2,909.6 L266.8,922.4 L276.4,932.1 L286.0,941.7 L291.6,946.5 L290.8,952.9 L284.4,950.5 L274.8,941.7 L263.6,928.9 L252.4,912.8Z" fill="#44541f"/>
<path d="M302.8,934.5 L310.0,932.1 L319.6,930.5 L329.2,925.7 L340.5,920.0 L348.5,924.0 L350.1,928.9 L345.3,935.3 L349.3,941.7 L343.7,946.5 L340.5,952.9 L337.3,958.5 L329.2,956.1 L319.6,951.3 L310.0,949.7 L306.8,941.7Z" fill="#44541f"/>
<path d="M291.6,956.1 L302.0,960.1 L316.4,964.9 L332.4,969.7 L345.3,972.9 L358.1,976.1 L358.1,978.5 L342.1,976.1 L326.0,972.1 L310.0,967.3 L294.0,960.1Z" fill="#44541f"/>
<path d="M358.1,869.6 L364.5,868.0 L367.7,872.8 L366.1,880.8 L363.7,888.8 L369.3,893.6 L364.5,895.2 L358.1,887.2 L356.5,879.2Z" fill="#44541f"/>
<path d="M367.7,892.0 L377.3,895.2 L383.7,903.2 L380.5,909.6 L372.5,906.4 L367.7,900.0Z" fill="#44541f"/>
<path d="M374.1,916.0 L383.7,912.8 L390.1,919.2 L388.5,928.9 L380.5,927.3 L374.9,922.4Z" fill="#44541f"/>
<path d="M343.7,912.0 L353.3,904.8 L354.9,906.4 L345.3,914.4Z" fill="#44541f"/>
<path d="M353.3,952.9 L358.1,949.7 L370.9,948.1 L374.1,950.5 L362.9,952.9 L361.3,957.7 L367.7,964.1 L366.1,966.5 L359.7,962.5 L356.5,965.7 L354.1,959.3Z" fill="#44541f"/>
<path d="M414.6,952.3 L426.9,954.3 L441.1,951.2 L461.5,952.3 L479.8,954.3 L490.0,960.4 L496.1,965.5 L485.9,967.5 L473.7,965.5 L461.5,970.6 L447.2,973.7 L441.1,968.6 L430.9,962.4 L420.7,958.4Z" fill="#44541f"/>
<path d="M384.1,942.1 L388.1,941.1 L389.2,950.2 L385.1,952.3Z" fill="#44541f"/>
<path d="M460.5,985.1 L464.6,975.7 L469.6,985.1Z" fill="#44541f"/>
<path d="M493.8,575.0 L545.0,575.0 L545.0,618.8 L520.1,615.9 L499.7,598.4Z" fill="#524e2c" filter="url(#b3)" opacity="1"/>
<rect x="140" y="577" width="500" height="408" filter="url(#spk)" opacity="0.28"/>
<path d="M285.6,575.0 L259.3,563.1 L494.0,563.1 L498.0,598.9 L504.0,614.8 L500.0,634.7 L498.0,694.3 L482.1,694.3 L472.1,642.6 L458.2,654.6 L447.1,675.2 L443.1,685.6 L432.4,683.2 L421.2,679.2 L404.9,676.8 L381.1,666.5 L362.0,671.7 L333.3,680.8 L304.7,668.9 L285.6,635.5 L280.8,606.8Z" fill="#f2f2f2" filter="url(#b3)"/>
<path d="M259.3,586.9 L279.2,583.0 L299.1,622.7 L327.0,666.5 L315.0,674.4 L291.2,654.6 L271.3,622.7Z" fill="#6a705c" filter="url(#b6)" opacity="0.55"/>
<path d="M364.7,635.5 L388.6,631.9 L416.5,640.6 L419.2,652.6 L394.6,656.9 L374.7,650.6Z" fill="#5a533c" filter="url(#b3)" opacity="1"/>
<path d="M418.4,646.6 L442.3,645.0 L446.3,666.5 L426.4,674.4Z" fill="#8a8676" filter="url(#b3)" opacity="0.6"/>
<path d="M479.2,572.1 L498.2,572.1 L501.1,583.8 L496.7,595.5 L488.0,591.1 L480.7,580.8Z" fill="#f0f0f0" filter="url(#b3)" opacity="1"/>
<path d="M508.4,583.8 L517.2,586.7 L523.0,601.3 L517.2,599.8Z" fill="#d8d8d8" filter="url(#b3)" opacity="0.7"/>
<path d="M306.8,584.1 L309.7,580.8 L321.4,578.7 L338.9,577.2 L338.9,572.1 L306.8,572.1Z" fill="#f2f2f2"/>
<path d="M365.2,573.5 L371.1,573.5 L373.3,585.2 L368.1,583.8Z" fill="#f2f2f2"/>
<path d="M406.1,592.8 L416.4,592.2 L417.1,596.2 L406.9,596.9Z" fill="#f2f2f2"/>
<path d="M465.3,593.3 L469.0,593.3 L469.0,595.8 L465.3,595.8Z" fill="#f2f2f2"/>
<path d="M265.7,676.0 L283.2,673.6 L299.1,680.8 L315.0,679.2 L310.2,687.2 L291.2,686.0 L276.8,688.8Z" fill="#e4e4e4" filter="url(#b6)" opacity="0.55"/>
<path d="M208.4,703.1 L225.5,697.5 L247.4,692.7 L263.3,694.3 L281.2,699.5" fill="none" stroke="#eeeeee" stroke-width="3.2" stroke-linecap="round" stroke-linejoin="round" filter="url(#b1)" opacity="0.7"/>
<path d="M209.6,703.1 L210.8,718.2 L212.4,730.9 L218.0,744.1 L224.3,754.8 L233.9,766.7 L243.4,778.7 L255.4,787.8 L267.3,795.4 L280.8,800.1" fill="none" stroke="#eeeeee" stroke-width="3.6" stroke-linecap="round" stroke-linejoin="round" filter="url(#b1)" opacity="0.6"/>
<path d="M213.6,714.2 L219.6,742.1 L239.4,771.9 L267.3,793.0" fill="none" stroke="#eeeeee" stroke-width="6" stroke-linecap="round" filter="url(#b3)" opacity="0.45"/>
<path d="M414.5,676.4 L423.2,674.4 L427.2,694.3 L418.4,698.3Z" fill="#e0e0e0" filter="url(#b3)" opacity="0.8"/>
<path d="M442.2,690.0 L446.3,692.7 L450.4,700.9 L448.4,702.2 L447.7,709.0 L449.0,717.2Z" fill="#e8e8e8" filter="url(#b1)"/>
<path d="M259.3,575.0 L327.0,575.0 L330.9,614.8 L354.8,654.6 L362.8,672.5 L327.0,680.8 L299.1,668.9 L275.2,623.5Z" filter="url(#spk2)" opacity="0.5"/>
</g>
</g>
<path d="M207.2,645.3 L213.3,647.3 L209.3,656.5 L201.1,664.6 L195.0,672.8 L190.9,683.0 L186.9,685.4 L185.8,678.9 L190.9,666.7 L198.1,656.5 L203.2,648.3Z" fill="#1c50a0" filter="url(#b1)"/>
<path d="M215.8,618.2 L219.1,620.8 L211.3,629.6 L207.6,628.4Z" fill="#1c50a0" filter="url(#b1)"/>
<path d="M163.4,726.8 L166.1,715.6 L170.6,700.9 L173.0,701.3 L171.0,715.6 L168.9,729.8 L165.5,732.3Z" fill="#1c50a0" filter="url(#b1)"/>
<path d="M320.3,687.1 L331.5,681.4 L341.7,672.4" fill="none" stroke="#0a0f1a" stroke-width="2" stroke-linecap="round"/>
<circle cx="393.5" cy="781" r="240" fill="url(#limb)"/>
</g>
<g font-family="Liberation Sans,sans-serif" font-size="14" font-weight="bold"><text x="381.8" y="775.2" fill="#0a1020" opacity="0.85">2</text><text x="384" y="788.4" fill="#0a1020" opacity="0.85">1</text><text x="381" y="774.4" fill="#f6f6f6">2</text><text x="383.2" y="787.6" fill="#f6f6f6">1</text></g>
<path d="M391,775 L391.6,786.6 M391.4,775.2 L393.2,782" stroke="#fff" stroke-width="0.9" fill="none"/><path d="M392.4,779 L396.6,779.4 L395.8,783.4 L392.2,783Z" fill="none" stroke="#f01818" stroke-width="1.2"/>
<path d="M634.5,954 V964.5 H731.5 V954 M682.5,960 V964.5" stroke="#fff" stroke-width="1" fill="none"/>
<text x="684" y="955" text-anchor="middle" font-family="Liberation Sans,sans-serif" font-size="12" fill="#fff">2000 Km</text>
</svg><!--GLOBE-END-->
</div>

<!-- ===== editor (image view) ===== -->
<div id="editor">
<div class="a" style="left:789px;top:74px;width:1107px;height:29px;background:#d4d4d4"></div>
<div class="a" style="left:788px;top:74px;width:140px;height:29px;background:#f1f2f1;border:1px solid #c0c0c0;border-left-color:#8e8e8e;border-bottom:0"></div>
<svg class="a" style="left:795px;top:80px" width="16" height="16" viewBox="795 80 16 16"><rect x="797.6" y="82.6" width="12.4" height="12.4" fill="#555" opacity="0.55"/><rect x="796.1" y="81" width="12.8" height="12.8" fill="#000"/><rect x="796.9" y="81.8" width="11.2" height="11.2" fill="#808080"/><rect x="797.00" y="82.00" width="1.1" height="1.1" fill="#a898f8"/><rect x="798.98" y="82.00" width="1.1" height="1.1" fill="#a898f8"/><rect x="800.96" y="82.00" width="1.1" height="1.1" fill="#a898f8"/><rect x="802.94" y="82.00" width="1.1" height="1.1" fill="#f0f000"/><rect x="804.92" y="82.00" width="1.1" height="1.1" fill="#f0f000"/><rect x="806.90" y="82.00" width="1.1" height="1.1" fill="#f0f000"/><rect x="797.00" y="83.98" width="1.1" height="1.1" fill="#a898f8"/><rect x="798.98" y="83.98" width="1.1" height="1.1" fill="#a898f8"/><rect x="800.96" y="83.98" width="1.1" height="1.1" fill="#a898f8"/><rect x="802.94" y="83.98" width="1.1" height="1.1" fill="#f0f000"/><rect x="804.92" y="83.98" width="1.1" height="1.1" fill="#d0c820"/><rect x="806.90" y="83.98" width="1.1" height="1.1" fill="#d0c820"/><rect x="797.00" y="85.96" width="1.1" height="1.1" fill="#a898f8"/><rect x="798.98" y="85.96" width="1.1" height="1.1" fill="#f0f000"/><rect x="800.96" y="85.96" width="1.1" height="1.1" fill="#a0a000"/><rect x="802.94" y="85.96" width="1.1" height="1.1" fill="#d0c820"/><rect x="804.92" y="85.96" width="1.1" height="1.1" fill="#d0c820"/><rect x="806.90" y="85.96" width="1.1" height="1.1" fill="#d0c820"/><rect x="797.00" y="87.94" width="1.1" height="1.1" fill="#f0f000"/><rect x="798.98" y="87.94" width="1.1" height="1.1" fill="#f0f000"/><rect x="800.96" y="87.94" width="1.1" height="1.1" fill="#d0c820"/><rect x="802.94" y="87.94" width="1.1" height="1.1" fill="#a0a000"/><rect x="804.92" y="87.94" width="1.1" height="1.1" fill="#a898f8"/><rect x="806.90" y="87.94" width="1.1" height="1.1" fill="#a898f8"/><rect x="797.00" y="89.92" width="1.1" height="1.1" fill="#d0c820"/><rect x="798.98" y="89.92" width="1.1" height="1.1" fill="#d0c820"/><rect x="800.96" y="89.92" width="1.1" height="1.1" fill="#a898f8"/><rect x="802.94" y="89.92" width="1.1" height="1.1" fill="#a898f8"/><rect x="804.92" y="89.92" width="1.1" height="1.1" fill="#a0a000"/><rect x="806.90" y="89.92" width="1.1" height="1.1" fill="#a898f8"/><rect x="797.00" y="91.90" width="1.1" height="1.1" fill="#f0f000"/><rect x="798.98" y="91.90" width="1.1" height="1.1" fill="#f0f000"/><rect x="800.96" y="91.90" width="1.1" height="1.1" fill="#a898f8"/><rect x="802.94" y="91.90" width="1.1" height="1.1" fill="#a898f8"/><rect x="804.92" y="91.90" width="1.1" height="1.1" fill="#a898f8"/><rect x="806.90" y="91.90" width="1.1" height="1.1" fill="#a898f8"/></svg>
<svg class="a" style="left:908px;top:82px" width="14" height="14" viewBox="908 82 14 14"><path d="M911.4,86.2 L918.8,93 M918.8,86.2 L911.4,93" stroke="#6c6c6c" stroke-width="1.3"/></svg>
<svg class="a" style="left:1824px;top:80px" width="70" height="16" viewBox="1824 80 70 16"><path d="M1834.6,83.6 L1829.4,88.4 L1834.6,93.2" fill="none" stroke="#bdbdbd" stroke-width="1"/><path d="M1845.4,83.6 L1850.6,88.4 L1845.4,93.2" fill="none" stroke="#bdbdbd" stroke-width="1"/><path d="M1862,86 L1866.4,90.4 L1870.8,86" fill="none" stroke="#555" stroke-width="1.1"/><rect x="1880.5" y="83.5" width="9" height="9" fill="none" stroke="#555" stroke-width="1"/></svg>
<div class="a" style="left:789px;top:103px;width:1107px;height:903px;background:linear-gradient(to right,#e6bc3a,rgba(230,188,58,0) 6px),linear-gradient(to left,#e6bc3a,rgba(230,188,58,0) 6px),linear-gradient(to bottom,#e6bc3a,rgba(230,188,58,0) 6px),linear-gradient(to top,#e6bc3a,rgba(230,188,58,0) 6px),#333333"></div>
<!--NAV-START--><svg class="a" style="left:790px;top:104px" width="110" height="126" viewBox="790 104 110 126">
<path d="M842.00,114.30 L842.00,108.10" stroke="#7c6a2c" stroke-width="4.1"/>
<path d="M849.15,114.93 L850.23,108.82" stroke="#666666" stroke-width="4.1"/>
<path d="M856.09,116.78 L858.21,110.96" stroke="#666666" stroke-width="4.1"/>
<path d="M862.60,119.82 L865.70,114.45" stroke="#666666" stroke-width="4.1"/>
<path d="M868.48,123.94 L872.47,119.19" stroke="#666666" stroke-width="4.1"/>
<path d="M873.56,129.02 L878.31,125.03" stroke="#666666" stroke-width="4.1"/>
<path d="M877.68,134.90 L883.05,131.80" stroke="#666666" stroke-width="4.1"/>
<path d="M880.72,141.41 L886.54,139.29" stroke="#666666" stroke-width="4.1"/>
<path d="M882.57,148.35 L888.68,147.27" stroke="#666666" stroke-width="4.1"/>
<path d="M883.20,155.50 L889.40,155.50" stroke="#666666" stroke-width="4.1"/>
<path d="M882.57,162.65 L888.68,163.73" stroke="#666666" stroke-width="4.1"/>
<path d="M880.72,169.59 L886.54,171.71" stroke="#666666" stroke-width="4.1"/>
<path d="M877.68,176.10 L883.05,179.20" stroke="#666666" stroke-width="4.1"/>
<path d="M873.56,181.98 L878.31,185.97" stroke="#666666" stroke-width="4.1"/>
<path d="M868.48,187.06 L872.47,191.81" stroke="#666666" stroke-width="4.1"/>
<path d="M862.60,191.18 L865.70,196.55" stroke="#666666" stroke-width="4.1"/>
<path d="M856.09,194.22 L858.21,200.04" stroke="#666666" stroke-width="4.1"/>
<path d="M849.15,196.07 L850.23,202.18" stroke="#666666" stroke-width="4.1"/>
<path d="M842.00,196.70 L842.00,202.90" stroke="#666666" stroke-width="4.1"/>
<path d="M834.85,196.07 L833.77,202.18" stroke="#666666" stroke-width="4.1"/>
<path d="M827.91,194.22 L825.79,200.04" stroke="#666666" stroke-width="4.1"/>
<path d="M821.40,191.18 L818.30,196.55" stroke="#666666" stroke-width="4.1"/>
<path d="M815.52,187.06 L811.53,191.81" stroke="#666666" stroke-width="4.1"/>
<path d="M810.44,181.98 L805.69,185.97" stroke="#666666" stroke-width="4.1"/>
<path d="M806.32,176.10 L800.95,179.20" stroke="#666666" stroke-width="4.1"/>
<path d="M803.28,169.59 L797.46,171.71" stroke="#666666" stroke-width="4.1"/>
<path d="M801.43,162.65 L795.32,163.73" stroke="#666666" stroke-width="4.1"/>
<path d="M800.80,155.50 L794.60,155.50" stroke="#666666" stroke-width="4.1"/>
<path d="M801.43,148.35 L795.32,147.27" stroke="#666666" stroke-width="4.1"/>
<path d="M803.28,141.41 L797.46,139.29" stroke="#666666" stroke-width="4.1"/>
<path d="M806.32,134.90 L800.95,131.80" stroke="#666666" stroke-width="4.1"/>
<path d="M810.44,129.02 L805.69,125.03" stroke="#666666" stroke-width="4.1"/>
<path d="M815.52,123.94 L811.53,119.19" stroke="#666666" stroke-width="4.1"/>
<path d="M821.40,119.82 L818.30,114.45" stroke="#666666" stroke-width="4.1"/>
<path d="M827.91,116.78 L825.79,110.96" stroke="#666666" stroke-width="4.1"/>
<path d="M834.85,114.93 L833.77,108.82" stroke="#666666" stroke-width="4.1"/>
<circle cx="842" cy="155.5" r="38" fill="#2f2f2f"/>
<path d="M0,-36.6 L14.2,-26 L7,-26 L7,-19.4 L-7,-19.4 L-7,-26 L-14.2,-26Z" fill="#6a6a6a" transform="translate(842,155.5) rotate(0)"/>
<path d="M0,-36.6 L14.2,-26 L7,-26 L7,-19.4 L-7,-19.4 L-7,-26 L-14.2,-26Z" fill="#6a6a6a" transform="translate(842,155.5) rotate(90)"/>
<path d="M0,-36.6 L14.2,-26 L7,-26 L7,-19.4 L-7,-19.4 L-7,-26 L-14.2,-26Z" fill="#6a6a6a" transform="translate(842,155.5) rotate(180)"/>
<path d="M0,-36.6 L14.2,-26 L7,-26 L7,-19.4 L-7,-19.4 L-7,-26 L-14.2,-26Z" fill="#6a6a6a" transform="translate(842,155.5) rotate(270)"/>
<path d="M847.40,155.50 L845.70,157.03 L845.82,159.32 L843.53,159.20 L842.00,160.90 L840.47,159.20 L838.18,159.32 L838.30,157.03 L836.60,155.50 L838.30,153.97 L838.18,151.68 L840.47,151.80 L842.00,150.10 L843.53,151.80 L845.82,151.68 L845.70,153.97Z" fill="#6a6a6a"/>
<rect x="795" y="216" width="95" height="3" fill="#5e5e5e"/><rect x="840.5" y="209.5" width="3.4" height="15.5" fill="#5e5e5e"/>
</svg><!--NAV-END-->
</div>

<!-- ===== right sidebar ===== -->
<div id="sidebar">
<span class="vt" style="left:1914px;top:99.5px">Product Library</span>
<span class="vt" style="left:1914px;top:234px">Layer Manager</span>
<span class="vt" style="left:1914px;top:366px">Mask Manager</span>
<div class="a" style="left:1900px;top:202px;width:16px;height:1px;background:#cfcfcf"></div>
<div class="a" style="left:1900px;top:334px;width:16px;height:1px;background:#cfcfcf"></div>
<!--SB-START--><svg class="a" style="left:1898px;top:76px" width="18" height="290" viewBox="1898 76 18 290">
<rect x="1904" y="84.2" width="11.6" height="8.8" fill="#9ed2fa"/><path d="M1904,93 L1908,87.6 L1911,90.6 L1915.6,84.2 V93Z" fill="#6ab4f4"/><path d="M1909.6,87 L1913.6,92.4" stroke="#1a5aa0" stroke-width="2"/><circle cx="1906.2" cy="83.9" r="3.7" fill="#e4f4fc" fill-opacity="0.9" stroke="#6e7478" stroke-width="1.1"/><path d="M1904.4,82.8 L1908,84.4" stroke="#b8c8cc" stroke-width="0.9"/>
<path d="M1905.4,222.8 H1917 L1912.8,227.0 H1902.2Z" fill="#b4b4f0" stroke="#26265e" stroke-width="1.2" stroke-linejoin="round"/>
<path d="M1905.4,219.6 H1917 L1912.8,223.79999999999998 H1902.2Z" fill="#c8c8fc" stroke="#26265e" stroke-width="1.2" stroke-linejoin="round"/>
<path d="M1905.4,216.4 H1917 L1912.8,220.6 H1902.2Z" fill="#a2a2e2" stroke="#26265e" stroke-width="1.2" stroke-linejoin="round"/>
<path d="M1905.4,354.6 H1917 L1912.8,358.8 H1902.2Z" fill="#a8a8dc" stroke="#0c0c1c" stroke-width="1.3" stroke-linejoin="round"/>
<path d="M1907.4,349.5 H1917 L1912,354.4 H1902.4Z" fill="#ffffff" stroke="#5a58a6" stroke-width="1.1" stroke-linejoin="round"/><path d="M1908.2,351 H1910.8 L1909.4,352.9 H1906.8Z" fill="#f00000"/><path d="M1913,354.6 H1917" stroke="#000" stroke-width="1.4"/>
</svg><!--SB-END-->
</div>

<!-- ===== status bar ===== -->
<div id="statusbar">
<div class="sep" style="left:989px"></div>
<div class="sep" style="left:1112px"></div>
<div class="sep" style="left:1315px"></div>
<div class="sep" style="left:1468px"></div>
<div class="sep" style="left:1701px"></div>
<svg class="a" style="left:1886px;top:1010px" width="17" height="17" viewBox="0 0 17 17"><path d="M1.2,10.4 C0.6,5.4 3.8,2.4 7.4,3.2 L7.8,1.1 L11.2,4.3 L7.2,6.8 L7.1,5.3 C5.2,5.2 3.9,7 4.1,10.4 Z" fill="#ccd6f0" stroke="#1c2c8c" stroke-width="1.1" stroke-linejoin="round"/><path d="M15.2,6 C15.8,11 12.6,14 9,13.2 L8.6,15.3 L5.2,12.1 L9.2,9.6 L9.3,11.1 C11.2,11.2 12.5,9.4 12.3,6 Z" fill="#ccd6f0" stroke="#1c2c8c" stroke-width="1.1" stroke-linejoin="round"/></svg>
</div>

<!--TXT-START--><span class="t" style="left:39.5px;top:8.5px;font-size:12px;color:#1b1b1b;transform:scaleX(0.972)">File</span>
<span class="t" style="left:73.4px;top:8.5px;font-size:12px;color:#1b1b1b;transform:scaleX(0.980)">Edit</span>
<span class="t" style="left:110.0px;top:8.5px;font-size:12px;color:#1b1b1b;transform:scaleX(0.992)">View</span>
<span class="t" style="left:152.2px;top:8.5px;font-size:12px;color:#1b1b1b;transform:scaleX(0.951)">Analysis</span>
<span class="t" style="left:210.8px;top:8.5px;font-size:12px;color:#1b1b1b;transform:scaleX(0.934)">Layer</span>
<span class="t" style="left:255.3px;top:8.5px;font-size:12px;color:#1b1b1b;transform:scaleX(1.015)">Vector</span>
<span class="t" style="left:305.6px;top:8.5px;font-size:12px;color:#1b1b1b;transform:scaleX(0.921)">Raster</span>
<span class="t" style="left:354.3px;top:8.5px;font-size:12px;color:#1b1b1b;transform:scaleX(1.016)">Optical</span>
<span class="t" style="left:407.7px;top:8.5px;font-size:12px;color:#1b1b1b;transform:scaleX(0.906)">Radar</span>
<span class="t" style="left:454.3px;top:8.5px;font-size:12px;color:#1b1b1b;transform:scaleX(0.989)">Tools</span>
<span class="t" style="left:498.1px;top:8.5px;font-size:12px;color:#1b1b1b;transform:scaleX(1.007)">Window</span>
<span class="t" style="left:557.7px;top:8.5px;font-size:12px;color:#1b1b1b;transform:scaleX(1.008)">Help</span>
<span class="t" style="left:934.7px;top:8.6px;font-size:12px;color:#9c9ca4;transform:scaleX(0.992)">SNAP 13</span>
<span class="t" style="left:1648.7px;top:8.0px;font-size:12.5px;color:#999999;transform:scaleX(0.957)">Search (Ctrl+I)</span>
<span class="t" style="left:17.2px;top:80.8px;font-size:12px;color:#505050;transform:scaleX(0.994)">Product Explorer</span>
<span class="t" style="left:127.0px;top:80.8px;font-size:12px;color:#1b1b1b;transform:scaleX(1.021)">Pixel Info</span>
<span class="t" style="left:24.9px;top:107.7px;font-size:12px;color:#1b1b1b;transform:scaleX(1.015)">Position</span>
<span class="t" style="left:8.8px;top:128.8px;font-size:12px;color:#1b1b1b;transform:scaleX(1.002)">Image-X</span>
<span class="t" style="left:8.8px;top:148.7px;font-size:12px;color:#1b1b1b;transform:scaleX(1.002)">Image-Y</span>
<span class="t" style="left:8.8px;top:168.6px;font-size:12px;color:#1b1b1b;transform:scaleX(1.023)">Longitude</span>
<span class="t" style="left:8.8px;top:188.6px;font-size:12px;color:#1b1b1b;transform:scaleX(1.002)">Latitude</span>
<span class="t" style="left:25.9px;top:208.5px;font-size:12px;color:#1b1b1b;transform:scaleX(0.969)">Time</span>
<span class="t" style="left:25.0px;top:229.6px;font-size:12px;color:#1b1b1b;transform:scaleX(0.939)">Bands</span>
<span class="t" style="left:9.5px;top:250.5px;font-size:12px;color:#1b1b1b;transform:scaleX(0.968)">Gamma0_VH</span>
<span class="t" style="left:25.9px;top:270.5px;font-size:12px;color:#1b1b1b;transform:scaleX(0.985)">Tie-Point Grids</span>
<span class="t" style="left:25.0px;top:290.8px;font-size:12px;color:#1b1b1b;transform:scaleX(0.929)">Flags</span>
<span class="t" style="left:492.6px;top:127.6px;font-size:13.2px;color:#1b1b1b;font-family:'Liberation Mono',monospace;transform:scaleX(0.893)">2194</span>
<span class="t" style="left:492.6px;top:147.6px;font-size:13.2px;color:#1b1b1b;font-family:'Liberation Mono',monospace;transform:scaleX(0.893)">5398</span>
<span class="t" style="left:436.9px;top:167.6px;font-size:13.2px;color:#1b1b1b;font-family:'Liberation Mono',monospace;transform:scaleX(0.882)">127°27'07&quot; E</span>
<span class="t" style="left:443.9px;top:187.6px;font-size:13.2px;color:#1b1b1b;font-family:'Liberation Mono',monospace;transform:scaleX(0.883)">35°09'39&quot; N</span>
<span class="t" style="left:499.1px;top:249.5px;font-size:13.2px;color:#1b1b1b;font-family:'Liberation Mono',monospace;transform:scaleX(0.932)">NaN</span>
<span class="t" style="left:527.7px;top:128.6px;font-size:12px;color:#1b1b1b;transform:scaleX(0.987)">pixel</span>
<span class="t" style="left:527.7px;top:148.6px;font-size:12px;color:#1b1b1b;transform:scaleX(0.987)">pixel</span>
<span class="t" style="left:527.7px;top:168.6px;font-size:12px;color:#1b1b1b;transform:scaleX(0.951)">degree</span>
<span class="t" style="left:527.7px;top:188.6px;font-size:12px;color:#1b1b1b;transform:scaleX(0.951)">degree</span>
<span class="t" style="left:527.7px;top:250.5px;font-size:12px;color:#1b1b1b;transform:scaleX(0.998)">intensity</span>
<span class="t" style="left:25.5px;top:521.2px;font-size:12px;color:#1b1b1b;transform:scaleX(1.021)">Snap to selected pin</span>
<span class="t" style="left:17.4px;top:550.4px;font-size:12px;color:#505050;transform:scaleX(1.033)">Navigation - [2] Gamma0_VH</span>
<span class="t" style="left:207.3px;top:550.4px;font-size:12px;color:#505050;transform:scaleX(1.035)">Colour Manipulation - [2] Gamma0_VH</span>
<span class="t" style="left:448.5px;top:550.4px;font-size:12px;color:#505050;transform:scaleX(1.008)">Uncertainty Visualisation</span>
<span class="t" style="left:601.0px;top:550.4px;font-size:12px;color:#1b1b1b;transform:scaleX(1.016)">World View</span>
<span class="t" style="left:272.3px;top:986.3px;font-size:12px;color:#1b1b1b;transform:scaleX(1.014)">Off Globe</span>
<span class="t" style="left:814.8px;top:80.6px;font-size:12px;color:#1b1b1b;transform:scaleX(1.006)">[2] Gamma0_VH</span>
<span class="t" style="left:1010.0px;top:1012.5px;font-size:12px;color:#1b1b1b;transform:scaleX(0.875)">X</span>
<span class="t" style="left:1037.6px;top:1012.5px;font-size:12px;color:#1b1b1b;transform:scaleX(1.150)">--</span>
<span class="t" style="left:1055.1px;top:1012.5px;font-size:12px;color:#1b1b1b;transform:scaleX(0.875)">Y</span>
<span class="t" style="left:1082.7px;top:1012.5px;font-size:12px;color:#1b1b1b;transform:scaleX(1.100)">--</span>
<span class="t" style="left:1153.5px;top:1012.5px;font-size:12px;color:#1b1b1b;transform:scaleX(0.969)">Lat</span>
<span class="t" style="left:1198.7px;top:1012.5px;font-size:12px;color:#1b1b1b;transform:scaleX(1.088)">--</span>
<span class="t" style="left:1215.2px;top:1012.5px;font-size:12px;color:#1b1b1b;transform:scaleX(1.011)">Lon</span>
<span class="t" style="left:1264.6px;top:1012.5px;font-size:12px;color:#1b1b1b;transform:scaleX(1.088)">--</span>
<span class="t" style="left:1345.0px;top:1012.5px;font-size:12px;color:#1b1b1b;transform:scaleX(1.088)">Zoom --</span>
<span class="t" style="left:1398.7px;top:1012.5px;font-size:12px;color:#1b1b1b;transform:scaleX(1.031)">Level --</span>
<span class="t" style="left:1518.5px;top:1012.5px;font-size:12px;color:#1b1b1b;transform:scaleX(1.068)">Pixel Spacing: -- m -- m</span>
<span class="t" style="left:1906.0px;top:1012.5px;font-size:12px;color:#1b1b1b;transform:scaleX(0.929)">2</span><!--TXT-END-->
</body>
</html>
